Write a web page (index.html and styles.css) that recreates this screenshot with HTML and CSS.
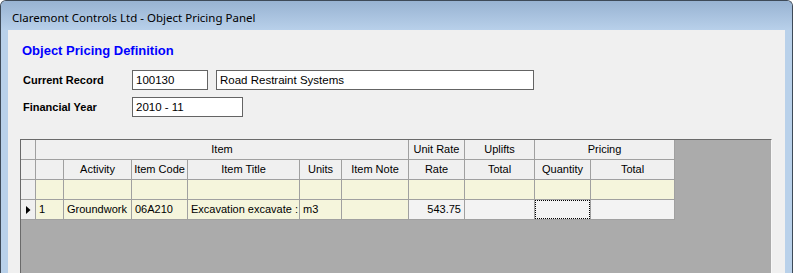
FILE: index.html
```html
<!DOCTYPE html>
<html lang="en">
<head>
  <meta charset="UTF-8">
  <title>Claremont Controls Ltd - Object Pricing Panel</title>
  <link rel="stylesheet" href="styles.css">
</head>
<body>
<div class="window">
  <div class="titlebar">Claremont Controls Ltd - Object Pricing Panel</div>
  <div class="frame">
    <div class="client">
      <h1 class="heading">Object Pricing Definition</h1>

      <div class="form">
        <div class="form-row">
          <span class="form-label">Current Record</span>
          <div class="field field-code">100130</div>
          <div class="field field-name">Road Restraint Systems</div>
        </div>
        <div class="form-row">
          <span class="form-label">Financial Year</span>
          <div class="field field-year">2010 - 11</div>
        </div>
      </div>

      <div class="grid">
        <div class="grid-table">
          <!-- header row 1 -->
          <div class="cell head row-head"></div>
          <div class="cell head span-item">Item</div>
          <div class="cell head">Unit Rate</div>
          <div class="cell head">Uplifts</div>
          <div class="cell head span-pricing">Pricing</div>

          <!-- header row 2 -->
          <div class="cell head row-head"></div>
          <div class="cell head"></div>
          <div class="cell head">Activity</div>
          <div class="cell head">Item Code</div>
          <div class="cell head">Item Title</div>
          <div class="cell head">Units</div>
          <div class="cell head">Item Note</div>
          <div class="cell head">Rate</div>
          <div class="cell head">Total</div>
          <div class="cell head">Quantity</div>
          <div class="cell head">Total</div>

          <!-- new row -->
          <div class="cell row-head"></div>
          <div class="cell new"></div>
          <div class="cell new"></div>
          <div class="cell new"></div>
          <div class="cell new"></div>
          <div class="cell new"></div>
          <div class="cell new"></div>
          <div class="cell new"></div>
          <div class="cell new"></div>
          <div class="cell new"></div>
          <div class="cell new"></div>

          <!-- data row -->
          <div class="cell row-head current">
            <svg width="5" height="8" viewBox="0 0 5 8"><polygon points="0,0 4.5,4 0,8" fill="#000"/></svg>
          </div>
          <div class="cell edit">1</div>
          <div class="cell edit">Groundwork</div>
          <div class="cell edit">06A210</div>
          <div class="cell edit">Excavation excavate :</div>
          <div class="cell edit">m3</div>
          <div class="cell edit"></div>
          <div class="cell calc num">543.75</div>
          <div class="cell calc"></div>
          <div class="cell calc focus-cell"><div class="focus"></div></div>
          <div class="cell calc"></div>
        </div>
      </div>
    </div>
  </div>
</div>
</body>
</html>
```

FILE: styles.css
```css
* { margin: 0; padding: 0; box-sizing: border-box; }
html, body { width: 793px; height: 273px; overflow: hidden; background: #fff; }
body {
  font-family: 'Liberation Sans', Arial, sans-serif;
  font-size: 11px;
  color: #000;
}
.window {
  height: 273px;
  display: flex;
  flex-direction: column;
  border: 1px solid #3e4a58;
  border-bottom: none;
  border-radius: 6px 6px 0 0;
  background: #b9d1ea;
  overflow: hidden;
}
.titlebar {
  height: 29px;
  flex-shrink: 0;
  padding: 8px 0 0 11px;
  background: linear-gradient(#98b3d2, #b8d0ea);
  font-family: 'Noto Sans', 'Open Sans', sans-serif;
  font-size: 11.5px;
  line-height: 18px;
  color: #000;
}
.frame {
  flex: 1;
  display: flex;
  padding: 0 7px;
}
.client {
  flex: 1;
  display: flex;
  flex-direction: column;
  background: #f0f0f0;
  padding: 13px 13px 0 12px;
}
.heading {
  font-size: 13px;
  font-weight: bold;
  line-height: 16px;
  color: #0000ff;
  padding-left: 2px;
}
.form {
  display: flex;
  flex-direction: column;
  gap: 7px;
  margin-top: 11px;
}
.form-row {
  display: flex;
  align-items: center;
  height: 20px;
}
.form-label {
  width: 112px;
  padding-left: 3px;
  font-weight: bold;
}
.field {
  height: 20px;
  border: 1px solid #646464;
  background: #fff;
  padding: 0 3px;
  line-height: 18px;
  font-size: 11.5px;
  white-space: nowrap;
}
.field-code { width: 76px; }
.field-name { width: 318px; margin-left: 8px; }
.field-year { width: 111px; }

/* data grid */
.grid {
  flex: 1;
  margin-top: 22px;
  background: #ababab;
  border-top: 1px solid #6a6a6a;
  border-left: 1px solid #6a6a6a;
  border-right: 1px solid #f7f7f7;
}
.grid-table {
  display: grid;
  grid-template-columns: 15px 28px 68px 56px 112px 42px 67px 56px 70px 56px 84px;
  grid-auto-rows: 20px;
  width: max-content;
}
.cell {
  border-right: 1px solid #a0a0a0;
  border-bottom: 1px solid #a0a0a0;
  padding: 0 3px;
  line-height: 19px;
  white-space: nowrap;
  overflow: hidden;
}
.head {
  background: #f0f0f0;
  text-align: center;
  padding: 0 1px;
}
.row-head { background: #f0f0f0; padding: 0; }
.current { display: flex; align-items: center; padding-left: 5px; }
.span-item { grid-column: span 6; }
.span-pricing { grid-column: span 2; }
.new, .edit { background: #f5f5dc; }
.calc { background: #f3f3f3; }
.num { text-align: right; }
.focus-cell { display: flex; padding: 0; }
.focus {
  flex: 1;
  border: 1px dotted #000;
}
```
